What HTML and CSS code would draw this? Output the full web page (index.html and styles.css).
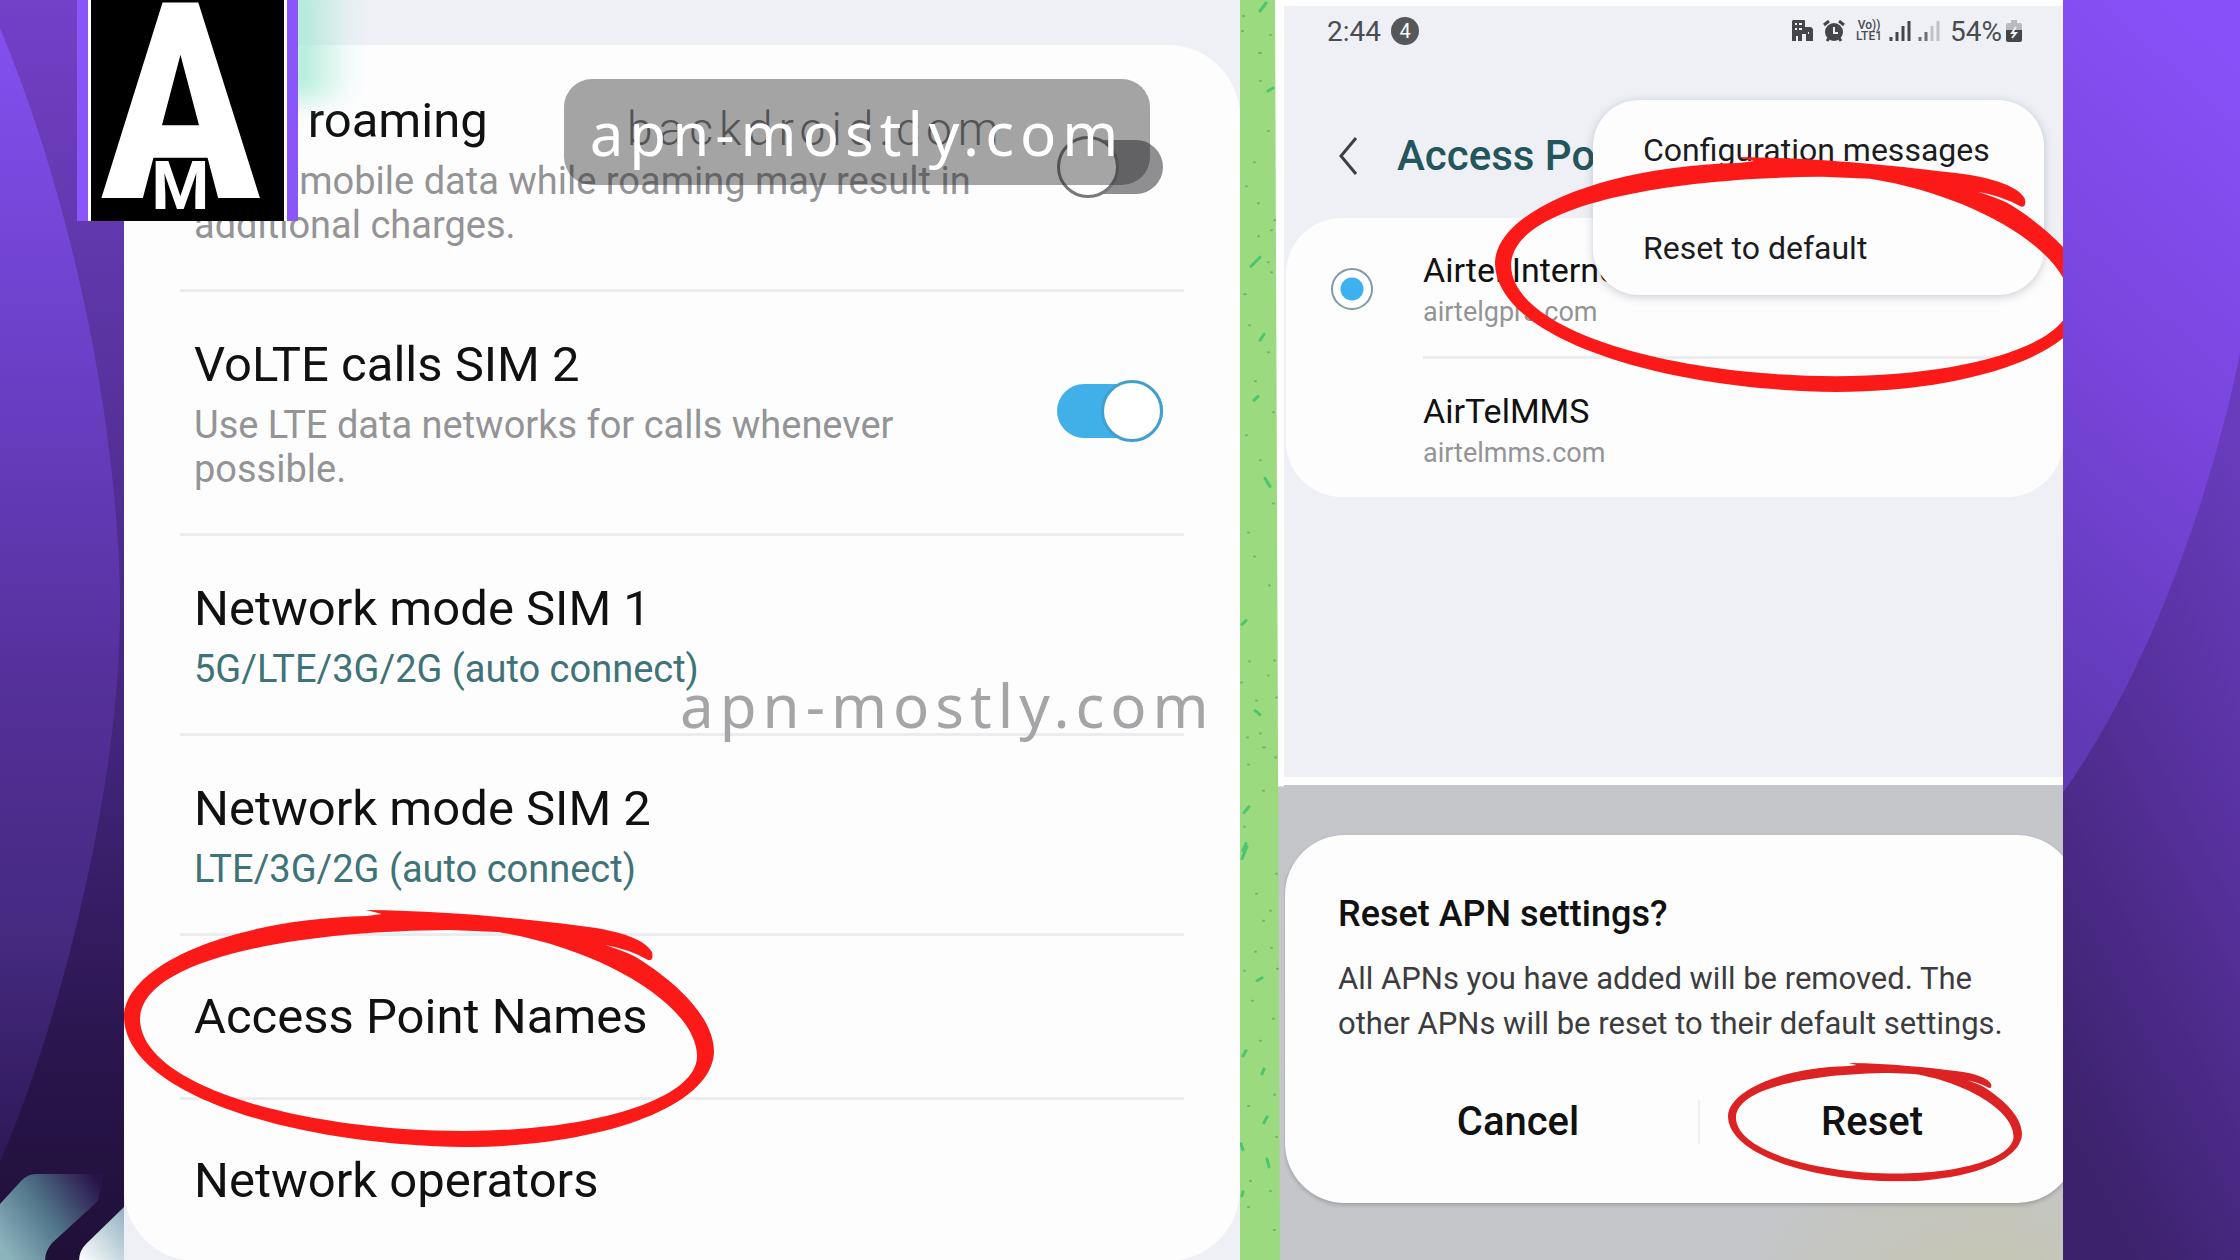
FILE: index.html
```html
<!DOCTYPE html>
<html lang="en">
<head>
    <meta charset="UTF-8">
    <meta name="viewport" content="width=device-width, initial-scale=1.0">
    <title>Reset APN settings</title>
    <link rel="stylesheet" href="styles.css">
</head>
<body>
    <!-- shared marker circle -->
    <svg class="defs" width="0" height="0" aria-hidden="true">
        <symbol id="marker" viewBox="0 0 590 238" preserveAspectRatio="none">
            <path fill-rule="evenodd" d="M242 1 C330 2 400 10 457 17 C500 22 522 32 528 43 Q530 52 524 51 Q505 40 481 36 Q500 42 510 47 C545 68 590 105 590 143 C588 200 470 238 340 238 C170 236 0 185 0 107 C2 55 110 10 243 7 L258 5 Z M374 23 L326 21 C170 22 17 50 16 110 C17 178 180 222 340 222 C470 222 572 190 573 148 C574 98 480 40 374 23 Z"/>
        </symbol>
    </svg>

    <main class="page">
        <div class="side">
            <svg class="side-art" viewBox="0 0 124 1260" preserveAspectRatio="none" aria-hidden="true">
                <defs>
                    <linearGradient id="leftBase" x1="0" y1="0" x2="0" y2="1">
                        <stop offset="0" stop-color="#7340c8"/>
                        <stop offset="0.25" stop-color="#5c35a4"/>
                        <stop offset="0.6" stop-color="#41247a"/>
                        <stop offset="0.85" stop-color="#29144a"/>
                        <stop offset="1" stop-color="#1f1038"/>
                    </linearGradient>
                    <linearGradient id="leftCurve" x1="0" y1="0" x2="0" y2="1">
                        <stop offset="0" stop-color="#8350f0"/>
                        <stop offset="0.3" stop-color="#6b3fc6"/>
                        <stop offset="0.6" stop-color="#532f97"/>
                        <stop offset="0.8" stop-color="#452a80"/>
                        <stop offset="1" stop-color="#2f1857"/>
                    </linearGradient>
                    <linearGradient id="tealBar" x1="0" y1="0.8" x2="1" y2="0.2">
                        <stop offset="0" stop-color="#8bb3bb"/>
                        <stop offset="0.5" stop-color="#4f7288"/>
                        <stop offset="1" stop-color="#29144a"/>
                    </linearGradient>
                    <linearGradient id="paleBar" x1="0" y1="1" x2="1" y2="0">
                        <stop offset="0" stop-color="#ffffff"/>
                        <stop offset="1" stop-color="#8fb0bf"/>
                    </linearGradient>
                </defs>
                <rect width="124" height="1260" fill="url(#leftBase)"/>
                <path d="M0 28 C80 220 120 450 120 610 C120 800 50 1050 0 1160 Z" fill="url(#leftCurve)"/>
                <path d="M0 1203 L22 1179 Q28 1173 36 1173 H104 L98 1200 L52 1242 Q45 1250 45 1260 H0 Z" fill="url(#tealBar)"/>
                <path d="M124 1206 L86 1243 Q79 1250 79 1260 H124 Z" fill="url(#paleBar)"/>
            </svg>
        </div>

        <section class="screen settings">
            <div class="glow"></div>
            <div class="settings-card">
                <div class="row">
                    <label class="row-text" for="roaming">
                        <span class="row-title">Data roaming</span>
                        <span class="row-note">Using mobile data while roaming may result in<br>additional charges.</span>
                    </label>
                    <input class="toggle" type="checkbox" id="roaming">
                </div>
                <div class="row">
                    <label class="row-text" for="volte">
                        <span class="row-title">VoLTE calls SIM 2</span>
                        <span class="row-note">Use LTE data networks for calls whenever<br>possible.</span>
                    </label>
                    <input class="toggle" type="checkbox" id="volte" checked>
                </div>
                <a class="row" href="#mode1">
                    <span class="row-text">
                        <span class="row-title">Network mode SIM 1</span>
                        <span class="row-note value">5G/LTE/3G/2G (auto connect)</span>
                    </span>
                </a>
                <a class="row" href="#mode2">
                    <span class="row-text">
                        <span class="row-title">Network mode SIM 2</span>
                        <span class="row-note value">LTE/3G/2G (auto connect)</span>
                    </span>
                </a>
                <a class="row single" href="#apn">
                    <span class="row-title">Access Point Names</span>
                    <svg class="marker marker-names" aria-hidden="true"><use href="#marker"/></svg>
                </a>
                <a class="row single last" href="#operators">
                    <span class="row-title">Network operators</span>
                </a>
            </div>

            <div class="logo">
                <span class="logo-a">A</span>
                <span class="logo-m">M</span>
            </div>
            <div class="old-mark">backdroid.com</div>
            <div class="site-badge">apn-mostly.com</div>
            <div class="site-mark">apn-mostly.com</div>
        </section>

        <div class="strip">
            <svg class="side-art" viewBox="0 0 44 1260" preserveAspectRatio="none" aria-hidden="true">
                <rect width="44" height="1260" fill="#fff"/>
                <path d="M38 786 H44 V1260 H38 Z" fill="#c5c6c9"/>
                <path d="M0 0 H35 L40 1260 H0 Z" fill="#9bda7f"/>
                <g stroke="#4cc56f" stroke-width="3" stroke-linecap="round">
                    <path d="M20 11 L26 3 M28 91 L33 88 M11 266 L20 257 M20 340 L24 334 M2 624 L6 620 M15 710 L20 714 M4 812 L9 806 M2 858 L7 846 M17 980 L22 977 M3 850 L6 843 M3 1055 L6 1050 M22 1073 L24 1068 M27 1158 L29 1166 M2 1195 L3 1191 M25 478 L30 486 M14 400 L18 396 M24 1122 L27 1116 M1 1143 L3 1149"/>
                </g>
                <g stroke="#74b26a" stroke-width="2" stroke-linecap="round">
                    <path d="M3 16h1 M2 31h1 M19 53h2 M20 81h1 M30 35h1 M28 131h1 M14 162h1 M6 186h1 M18 203h1 M34 220h1 M31 230h1 M18 236h1 M28 262h1 M31 272h1 M4 294h2 M9 325h1 M28 352h1 M15 381h1 M33 412h1 M6 435h1 M20 460h1 M33 503h1 M8 532h1 M14 556h1 M29 585h1 M9 661h1 M34 660h1 M28 675h1 M1 682h1 M16 700h1 M36 697h1 M20 733h1 M7 737h1 M23 747h2 M8 764h1 M35 757h1 M23 790h1 M4 826h1 M36 873h1 M16 893h1 M30 910h1 M23 920h1 M31 947h1 M15 951h1 M37 968h1 M4 970h1 M12 1000h1 M33 1018h1 M20 1040h1 M34 1094h1 M8 1105h1 M36 1136h1 M10 1180h1 M30 1190h1 M8 1206h1 M34 1229h1"/>
                </g>
            </svg>
        </div>

        <section class="screen phone">
            <div class="apn">
                <header class="status">
                    <span class="clock">2:44</span>
                    <span class="count">4</span>
                    <div class="status-icons">
                        <svg class="icon building" viewBox="0 0 22 22" aria-hidden="true">
                            <path fill="#444649" fill-rule="evenodd" d="M2 0H13Q14 0 14 1V7H20L22 9V21H15V14H11V21H1V1ZM4 3H6V5H4ZM8 3H11V5H8ZM4 8H6V10H4ZM8 8H11V10H8ZM5 16H7V21H5ZM17 12H18V14H17Z"/>
                        </svg>
                        <svg class="icon alarm" viewBox="0 0 22 22" aria-hidden="true">
                            <circle cx="11" cy="12" r="9" fill="#444649"/>
                            <path d="M1 5L6 1M21 5L16 1M4 21L6 18M18 21L16 18" stroke="#444649" stroke-width="3"/>
                            <path d="M11 7V13H15" fill="none" stroke="#eee" stroke-width="2"/>
                        </svg>
                        <span class="volte-icon"><span>Vo))</span><span>LTE1</span></span>
                        <svg class="icon signal" viewBox="0 0 22 22" aria-hidden="true">
                            <path d="M2 17V21M8 12V21M14 6V21M20 1V21" stroke="#444649" stroke-width="3"/>
                        </svg>
                        <svg class="icon signal-weak" viewBox="0 0 22 22" aria-hidden="true">
                            <path d="M2 17V21M8 12V21" stroke="#6b6d70" stroke-width="3"/>
                            <path d="M14 6V21M20 1V21" stroke="#c0c2c5" stroke-width="3"/>
                        </svg>
                        <span class="percent">54%</span>
                        <svg class="icon battery" viewBox="0 0 16 22" aria-hidden="true">
                            <path fill="#b8babd" d="M5 0H11V3H14Q16 3 16 5V10H0V5Q0 3 2 3H5Z"/>
                            <path fill="#444649" d="M0 10H16V20Q16 22 14 22H2Q0 22 0 20Z"/>
                            <path d="M10 7L6 13H10L6 18" fill="none" stroke="#eee" stroke-width="2"/>
                        </svg>
                    </div>
                </header>

                <div class="title-bar">
                    <button class="back" type="button" aria-label="Back">
                        <svg viewBox="0 0 20 38" aria-hidden="true"><path d="M18 1L3 19L18 37" fill="none" stroke="#3a3f44" stroke-width="3"/></svg>
                    </button>
                    <h1>Access Point Names</h1>
                </div>

                <div class="apn-list">
                    <div class="apn-row">
                        <input class="radio" type="radio" name="apn" id="internet" checked>
                        <label class="apn-text" for="internet">
                            <span class="apn-name">Airtel Internet</span>
                            <span class="apn-host">airtelgprs.com</span>
                        </label>
                    </div>
                    <div class="apn-row">
                        <div class="apn-text">
                            <span class="apn-name">AirTelMMS</span>
                            <span class="apn-host">airtelmms.com</span>
                        </div>
                    </div>
                </div>

                <div class="menu">
                    <button type="button">Configuration messages</button>
                    <button type="button">Reset to default</button>
                </div>
                <svg class="marker marker-menu" aria-hidden="true"><use href="#marker"/></svg>
            </div>

            <div class="overlay">
                <div class="dialog" role="dialog" aria-labelledby="dialog-title">
                    <h2 id="dialog-title">Reset APN settings?</h2>
                    <p>All APNs you have added will be removed. The<br>other APNs will be reset to their default settings.</p>
                    <div class="actions">
                        <button type="button">Cancel</button>
                        <button type="button">Reset
                            <svg class="marker marker-reset" aria-hidden="true"><use href="#marker"/></svg>
                        </button>
                    </div>
                </div>
            </div>
        </section>

        <div class="side">
            <svg class="side-art" viewBox="0 0 177 1260" preserveAspectRatio="none" aria-hidden="true">
                <defs>
                    <linearGradient id="rightBase" x1="0.6" y1="0.25" x2="0.4" y2="1">
                        <stop offset="0" stop-color="#683cbc"/>
                        <stop offset="0.4" stop-color="#58319f"/>
                        <stop offset="1" stop-color="#3c226c"/>
                    </linearGradient>
                    <linearGradient id="rightCurve" x1="0.6" y1="0" x2="0.4" y2="1">
                        <stop offset="0" stop-color="#8850f8"/>
                        <stop offset="0.5" stop-color="#7845dc"/>
                        <stop offset="1" stop-color="#6039b4"/>
                    </linearGradient>
                </defs>
                <rect width="177" height="1260" fill="url(#rightBase)"/>
                <path d="M0 0 H177 V353 C145 510 80 680 0 792 Z" fill="url(#rightCurve)"/>
            </svg>
        </div>
    </main>
</body>
</html>
```

FILE: styles.css
```css
*,
*::before {
    box-sizing: border-box;
}

body {
    margin: 0;
    font-family: Roboto, "Liberation Sans", sans-serif;
    background-color: #4b2a88;
    color: #111;
}

button {
    font-family: inherit;
    border: none;
    background: none;
    padding: 0;
    cursor: pointer;
}

a {
    color: inherit;
    text-decoration: none;
}

.defs {
    position: absolute;
}

/* side art | settings | strip | phone | side art */
.page {
    display: grid;
    grid-template-columns: 124fr 1116fr 44fr 779fr 177fr;
    min-height: 100vh;
    overflow: hidden;
}

.side,
.strip {
    position: relative;
}

.side-art {
    position: absolute;
    width: 100%;
    height: 100%;
}

.screen {
    position: relative;
    min-width: 0;
    background-color: #eef0f6;
}

.marker {
    position: absolute;
    fill: #fb1a17;
    pointer-events: none;
}

/* Settings list */
.settings {
    padding-top: 45px;
}

.settings-card {
    background-color: #fdfdfe;
    border-radius: 72px;
    padding: 0 56px;
}

.glow {
    position: absolute;
    z-index: 1;
    left: 160px;
    top: -20px;
    width: 70px;
    height: 120px;
    background: linear-gradient(to right, #9be8cf, rgba(165, 236, 214, 0));
    filter: blur(12px);
}

.row {
    position: relative;
    display: flex;
    justify-content: space-between;
    align-items: center;
    padding: 44px 21px 42px 14px;
    border-bottom: 3px solid #ececef;
}

.row:first-child {
    padding-top: 47px;
}

.row.single {
    padding-top: 52px;
    padding-bottom: 51px;
}

.row.last {
    border-bottom: none;
}

.row-text {
    display: flex;
    flex-direction: column;
    gap: 9px;
}

.row-title {
    font-size: 49px;
    line-height: 58px;
}

.row-note {
    font-size: 38px;
    line-height: 44px;
    color: #949496;
}

.row-note.value {
    color: #3f7377;
}

.toggle {
    appearance: none;
    position: relative;
    flex: none;
    margin: 0 0 6px;
    width: 106px;
    height: 54px;
    border-radius: 27px;
    background: linear-gradient(to right, transparent 30px, #8f8f91 30px);
}

.toggle::before {
    content: "";
    position: absolute;
    left: 0;
    top: -4px;
    width: 62px;
    height: 62px;
    border: 3px solid #77777a;
    border-radius: 50%;
    background-color: #fff;
}

.toggle:checked {
    background: #41afe8;
}

.toggle:checked::before {
    left: 44px;
    border-color: #3f9fd0;
}

.marker-names {
    left: -56px;
    top: -27px;
    width: 590px;
    height: 238px;
}

/* Logo and site marks */
.logo {
    position: absolute;
    z-index: 2;
    left: -47px;
    top: 0;
    width: 221px;
    height: 221px;
    background-color: #000;
    border: solid #8a55f9;
    border-width: 0 11px;
    box-shadow: inset 3px 0 #fff, inset -3px 0 #fff;
    color: #fff;
    font-weight: bold;
    text-align: center;
}

.logo-a,
.logo-m {
    position: absolute;
    left: 0;
    right: 14px;
}

.logo-a {
    top: -46px;
    font-family: "Liberation Sans Narrow", "Roboto Condensed", "Liberation Sans", sans-serif;
    font-size: 275px;
    line-height: 300px;
}

.logo-m {
    bottom: -6px;
    font-size: 66px;
    line-height: 80px;
}

.site-badge,
.site-mark,
.old-mark {
    position: absolute;
    font-family: "Noto Sans", "Open Sans", sans-serif;
    white-space: nowrap;
}

.site-badge {
    left: 440px;
    top: 79px;
    width: 586px;
    height: 106px;
    border-radius: 28px;
    background-color: rgba(30, 30, 32, 0.4);
    color: #fff;
    font-size: 60px;
    line-height: 108px;
    letter-spacing: 6px;
    text-align: center;
}

.site-mark {
    left: 556px;
    top: 665px;
    color: #a5a5a7;
    font-size: 60px;
    line-height: 80px;
    letter-spacing: 6px;
}

.old-mark {
    left: 503px;
    top: 99px;
    color: #77777a;
    font-family: Roboto, sans-serif;
    font-weight: 300;
    font-size: 46px;
    line-height: 60px;
    letter-spacing: 6px;
}

/* Access point screen */
.phone {
    display: flex;
    flex-direction: column;
    overflow: hidden;
}

.apn {
    position: relative;
    border: solid #fff;
    border-width: 6px 0 8px;
    padding-bottom: 280px;
}

.status {
    display: flex;
    align-items: center;
    height: 50px;
    padding: 0 41px 0 43px;
    color: #4a4c50;
    font-size: 28px;
}

.count {
    width: 28px;
    margin-left: 10px;
    border-radius: 50%;
    background-color: #55575a;
    color: #fff;
    font-size: 20px;
    line-height: 28px;
    text-align: center;
}

.status-icons {
    display: flex;
    align-items: center;
    margin-left: auto;
}

.icon {
    width: 22px;
    height: 22px;
}

.alarm {
    margin: 0 9px 0 10px;
}

.volte-icon {
    display: flex;
    flex-direction: column;
    width: 30px;
    font-size: 12px;
    font-weight: 500;
    line-height: 11px;
    text-align: center;
}

.signal {
    margin: 0 7px 0 5px;
}

.percent {
    margin: 0 4px 0 10px;
}

.battery {
    width: 16px;
}

.title-bar {
    display: flex;
    align-items: center;
    gap: 39px;
    padding: 76px 0 38px 54px;
}

.back {
    width: 20px;
    height: 38px;
}

.back svg {
    display: block;
}

h1 {
    margin: 0;
    font-size: 42px;
    line-height: 48px;
    font-weight: 500;
    color: #23565c;
}

.apn-list {
    margin-left: 2px;
    border-radius: 56px;
    background-color: #fdfdfe;
}

.apn-row {
    display: grid;
    grid-template-columns: 42px 1fr;
    align-items: center;
    column-gap: 50px;
    padding: 0 30px 0 45px;
}

.apn-text {
    grid-column: 2;
    display: flex;
    flex-direction: column;
    gap: 3px;
    padding: 31px 0 26px;
}

.apn-row:first-child .apn-text {
    border-bottom: 3px solid #ececef;
}

.apn-name {
    font-size: 34px;
    line-height: 42px;
}

.apn-host {
    font-size: 27px;
    line-height: 36px;
    color: #949496;
}

.radio {
    appearance: none;
    margin: 0;
    width: 42px;
    height: 42px;
    border: 2px solid #7f9aa5;
    border-radius: 50%;
    background: radial-gradient(circle, #3db1ef 11px, #fff 12px);
}

.menu {
    position: absolute;
    right: 19px;
    top: 94px;
    width: 451px;
    padding: 26px 0 23px;
    border-radius: 46px;
    background-color: #fdfdfe;
    box-shadow: 0 2px 10px rgba(60, 60, 80, 0.25);
}

.menu button {
    display: block;
    width: 100%;
    padding: 0 0 0 50px;
    font-size: 32px;
    line-height: 48px;
    color: #1c1c1e;
    text-align: left;
}

.menu button + button {
    margin-top: 50px;
}

.marker-menu {
    left: 211px;
    top: 150px;
    width: 592px;
    height: 236px;
}

/* Reset dialog */
.overlay {
    flex: 1;
    padding-top: 50px;
    background: radial-gradient(ellipse at 90% 110%, #c6c5ae, #c4c6c9 25%);
}

.dialog {
    margin: 0 -14px 0 1px;
    padding: 59px 53px;
    border-radius: 60px;
    background-color: #fdfdfe;
    box-shadow: 0 2px 4px rgba(0, 0, 0, 0.2);
}

h2 {
    margin: 0 0 22px;
    font-size: 36px;
    line-height: 40px;
    font-weight: 500;
}

.dialog p {
    margin: 0 0 54px;
    font-size: 31px;
    line-height: 45px;
    color: #3c3c3e;
    white-space: nowrap;
}

.actions {
    display: grid;
    grid-template-columns: 362fr 344fr;
    margin-right: -20px;
}

.actions button {
    position: relative;
    font-size: 40px;
    line-height: 44px;
    font-weight: 500;
    color: #111;
}

.actions button:first-child {
    border-right: 2px solid #f0f0f2;
}

.marker-reset {
    left: 51%;
    top: 50%;
    width: 294px;
    height: 119px;
    transform: translate(-50%, -50%);
    fill: #dd2224;
}
```
